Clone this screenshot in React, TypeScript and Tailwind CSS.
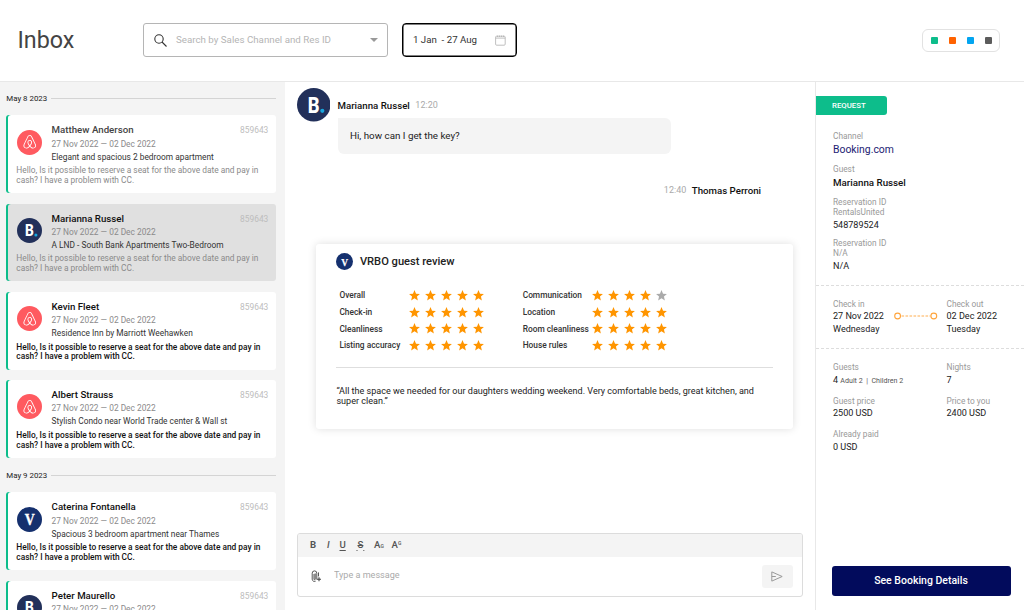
import { useState } from "react";
import { FaAirbnb } from "react-icons/fa";
import clsx from "clsx";

type Channel = "airbnb" | "booking" | "vrbo";

interface Thread {
  id: number;
  name: string;
  property: string;
  channel: Channel;
  read?: boolean;
}

const groups: { date: string; threads: Thread[] }[] = [
  {
    date: "May 8 2023",
    threads: [
      { id: 1, name: "Matthew Anderson", property: "Elegant and spacious 2 bedroom apartment", channel: "airbnb", read: true },
      { id: 2, name: "Marianna Russel", property: "A LND - South Bank Apartments Two-Bedroom", channel: "booking", read: true },
      { id: 3, name: "Kevin Fleet", property: "Residence Inn by Marriott Weehawken", channel: "airbnb" },
      { id: 4, name: "Albert Strauss", property: "Stylish Condo near World Trade center & Wall st", channel: "airbnb" },
    ],
  },
  {
    date: "May 9 2023",
    threads: [
      { id: 5, name: "Caterina Fontanella", property: "Spacious 3 bedroom apartment near Thames", channel: "vrbo" },
      { id: 6, name: "Peter Maurello", property: "Residence Inn by Marriott Weehawken", channel: "booking" },
    ],
  },
];

const ratings = [
  [
    { label: "Overall", stars: 5 },
    { label: "Check-in", stars: 5 },
    { label: "Cleanliness", stars: 5 },
    { label: "Listing accuracy", stars: 5 },
  ],
  [
    { label: "Communication", stars: 4 },
    { label: "Location", stars: 5 },
    { label: "Room cleanliness", stars: 5 },
    { label: "House rules", stars: 5 },
  ],
];

const ChannelLogo = ({ channel, className }: { channel: Channel; className: string }) => {
  if (channel === "airbnb") {
    return (
      <div className={clsx("flex shrink-0 items-center justify-center rounded-full bg-[#ff5a60] text-white", className)}>
        <FaAirbnb className="h-[62%] w-[62%]" />
      </div>
    );
  }
  if (channel === "booking") {
    return (
      <svg viewBox="0 0 34 34" className={clsx("shrink-0", className)}>
        <circle cx="17" cy="17" r="17" fill="#22305a" />
        <text x="11" y="25" textLength="12" lengthAdjust="spacingAndGlyphs" fontFamily="Roboto" fontWeight="800" fontSize="21.5" fill="#fff">B</text>
        <circle cx="25.7" cy="23.2" r="2.1" fill="#18a5dc" />
      </svg>
    );
  }
  return (
    <svg viewBox="0 0 34 34" className={clsx("shrink-0", className)}>
      <circle cx="17" cy="17" r="17" fill="#15306e" />
      <text x="10.6" y="25" textLength="13.6" lengthAdjust="spacingAndGlyphs" fontFamily="Liberation Serif" fontWeight="700" fontSize="22" fill="#fff" stroke="#fff" strokeWidth="0.5">V</text>
    </svg>
  );
};

const Star = ({ filled }: { filled: boolean }) => (
  <svg viewBox="0 0 24 24" className={clsx("h-[13px] w-[13px]", filled ? "fill-[#ff9500]" : "fill-[#aaaaaa]")}>
    <path d="M12 17.27 18.18 21l-1.64-7.03L22 9.24l-7.19-.61L12 2 9.19 8.63 2 9.24l5.46 4.73L5.82 21z" />
  </svg>
);

const DateDivider = ({ label }: { label: string }) => (
  <div className="flex h-[33.3px] items-center gap-[4.5px]">
    <span className="w-[40px] text-[7.9px] whitespace-nowrap text-[#222]">{label}</span>
    <span className="h-px flex-1 bg-[#d4d4d4]" />
  </div>
);

interface ThreadCardProps {
  thread: Thread;
  selected: boolean;
  onClick: () => void;
}

const ThreadCard: React.FC<ThreadCardProps> = ({ thread, selected, onClick }) => (
  <div
    onClick={onClick}
    className={clsx(
      "mb-[10.5px] h-[77.8px] shrink-0 cursor-pointer rounded-[3px] pt-[8.3px] pr-[8px] pl-[10px] shadow-[inset_2px_0_0_#0dbd8b]",
      selected ? "bg-[#e0e0e0]" : "bg-white"
    )}
  >
    <div className="flex">
      <ChannelLogo channel={thread.channel} className="mt-[6px] ml-[0.6px] h-[25px] w-[25px]" />
      <div className="ml-[9.7px] flex-1 whitespace-nowrap">
        <div className="flex h-[14px] items-center justify-between">
          <span className={clsx("text-[9.7px] font-medium", thread.read && !selected ? "text-[#444]" : "text-[#111]")}>{thread.name}</span>
          <span className="text-[8.4px] text-[#bdbdbd]">859643</span>
        </div>
        <div className="h-[13px] text-[8.36px] leading-[13px] text-[#8a8a8a]">27 Nov 2022 — 02 Dec 2022</div>
        <div className="h-[12px] text-[8.36px] leading-[12px] text-[#333]">{thread.property}</div>
      </div>
    </div>
    <p className={clsx("mt-[3.5px] text-[8.36px] leading-[9.8px] whitespace-nowrap", thread.read ? "text-[#8a8a8a]" : "font-medium text-[#111]")}>
      Hello, Is it possible to reserve a seat for the above date and pay in
      <br />
      cash? I have a problem with CC.
    </p>
  </div>
);

const Label = ({ children }: { children: React.ReactNode }) => (
  <div className="h-[10px] text-[8.3px] leading-[10px] text-[#999]">{children}</div>
);

const Value = ({ children }: { children: React.ReactNode }) => (
  <div className="h-[12.5px] text-[9.05px] leading-[12.5px] text-[#222]">{children}</div>
);

const App = () => {
  const [selected, setSelected] = useState(2);
  const [message, setMessage] = useState("");

  return (
    <div className="flex h-[610px] w-[1024px] flex-col overflow-hidden bg-white font-['Roboto',sans-serif] text-[#222]">
      <header className="flex h-[82px] shrink-0 items-center border-b border-[#e8e8e8] pb-[1px]">
        <h1 className="w-[143px] pt-[2px] pl-[17.5px] text-[23.3px] leading-none text-[#444]">Inbox</h1>
        <div className="flex h-[34px] w-[245px] items-center rounded-[3px] border border-[#b5b5b5] pr-[9px] pl-[10px]">
          <svg viewBox="0 0 13 13" className="h-[13px] w-[13px]" fill="none" stroke="#333" strokeWidth="1.1">
            <circle cx="5" cy="5" r="4.2" />
            <path d="m8 8 4.5 4.5" />
          </svg>
          <span className="ml-[9px] flex-1 text-[9.75px] whitespace-nowrap text-[#b5b5b5]">Search by Sales Channel and Res ID</span>
          <svg viewBox="0 0 8 4" className="h-[4px] w-[8px]" fill="#999"><path d="M0 0h8L4 4z" /></svg>
        </div>
        <div className="ml-[14px] flex h-[34px] w-[115px] items-center justify-between rounded-[4px] border border-black pr-[10px] pl-[10px] shadow-[inset_0_0_0_0.5px_#000]">
          <span className="text-[9.7px] whitespace-pre text-[#333]">1 Jan  - 27 Aug</span>
          <svg viewBox="0 0 11 11" className="h-[11px] w-[11px]" fill="none" stroke="#b0b0b0" strokeWidth="0.8">
            <rect x="0.6" y="1.2" width="9.6" height="9" rx="1" />
            <path d="M.6 3.1h9.6M2.5 .6v1.4M4.5 .6v1.4M6.5 .6v1.4M8.5 .6v1.4" />
          </svg>
        </div>
        <div className="mr-[23.7px] ml-auto flex h-[23px] w-[78px] items-center justify-between rounded-[6px] border border-[#e2e2e2] px-[7.5px]">
          <span className="h-[7px] w-[7px] rounded-[1px] bg-[#0dbd8b]" />
          <span className="h-[7px] w-[7px] rounded-[1px] bg-[#ff6200]" />
          <span className="h-[7px] w-[7px] rounded-[1px] bg-[#03a5f0]" />
          <span className="h-[7px] w-[7px] rounded-[1px] bg-[#5c5c5c]" />
        </div>
      </header>

      <div className="flex min-h-0 flex-1">
        <aside className="flex w-[284.5px] shrink-0 flex-col overflow-hidden bg-[#f4f4f4] pr-[8.2px] pl-[6.3px]">
          {groups.map((group, i) => (
            <div key={group.date} className={clsx(i > 0 && "-mt-[9.5px]")}>
              <DateDivider label={group.date} />
              {group.threads.map((thread) => (
                <ThreadCard key={thread.id} thread={thread} selected={selected === thread.id} onClick={() => setSelected(thread.id)} />
              ))}
            </div>
          ))}
        </aside>

        <main className="flex flex-1 flex-col pr-[12px] pl-[12px]">
          {/* Conversation */}
          <div className="flex pt-[6.4px]">
            <ChannelLogo channel="booking" className="h-[33.5px] w-[33.5px]" />
            <div className="ml-[7.5px] pt-[9.6px]">
              <div className="flex h-[16px] items-center gap-[5.5px]">
                <span className="text-[9.7px] font-medium text-[#111]">Marianna Russel</span>
                <span className="text-[9px] text-[#aaa]">12:20</span>
              </div>
              <div className="mt-[4.5px] flex h-[35.5px] w-[333px] items-center rounded-[6px] rounded-tl-none bg-[#f4f4f4] pl-[12.5px] text-[9.8px]">
                Hi, how can I get the key?
              </div>
            </div>
          </div>
          <div className="mt-[29.2px] mr-[42px] flex h-[16px] items-center justify-end gap-[5.5px]">
            <span className="text-[9px] text-[#aaa]">12:40</span>
            <span className="text-[9.7px] font-medium text-[#111]">Thomas Perroni</span>
          </div>

          {/* Guest review */}
          <section className="mt-[45px] ml-[19.4px] h-[185px] w-[477.6px] rounded-[3px] bg-white pt-[9.3px] pr-[20.5px] pl-[20.5px] shadow-[0_0_8px_rgba(0,0,0,0.13)]">
            <div className="flex items-center gap-[6.5px]">
              <ChannelLogo channel="vrbo" className="h-[17px] w-[17px]" />
              <h2 className="text-[11.15px] leading-[17px] font-medium">VRBO guest review</h2>
            </div>
            <div className="mt-[16.7px] ml-[3px] flex">
              {ratings.map((column, i) => (
                <div key={i} className="w-[183.3px]">
                  {column.map((row) => (
                    <div key={row.label} className="flex h-[16.7px] items-center">
                      <span className="w-[68.8px] text-[8.36px] font-medium whitespace-nowrap text-[#333]">{row.label}</span>
                      <div className="flex gap-[3px]">
                        {[1, 2, 3, 4, 5].map((n) => (
                          <Star key={n} filled={n <= row.stars} />
                        ))}
                      </div>
                    </div>
                  ))}
                </div>
              ))}
            </div>
            <div className="mt-[13.5px] h-px bg-[#dedede]" />
            <p className="mt-[17.5px] text-[9.05px] leading-[10.3px] whitespace-nowrap">
              “All the space we needed for our daughters wedding weekend. Very comfortable beds, great kitchen, and
              <br />
              super clean.”
            </p>
          </section>

          {/* Message editor */}
          <div className="mt-auto mb-[13px] h-[64px] overflow-hidden rounded-[3px] border border-[#dcdcdc]">
            <div className="flex h-[22.5px] items-center bg-[#f4f4f4] pl-[12.5px] text-[9.6px] font-medium text-[#555]">
              <span className="w-[17px] font-bold">B</span>
              <span className="w-[12.5px] italic">I</span>
              <span className="w-[17px] underline underline-offset-2">U</span>
              <span className="w-[17.5px] whitespace-pre line-through"><span className="text-[4px]"> </span>S<span className="text-[4px]"> </span></span>
              <span className="w-[17.5px]">A<span className="text-[5px]">G</span></span>
              <span>A<span className="relative -top-[3px] text-[5px]">G</span></span>
            </div>
            <div className="flex h-[39px] items-center pr-[9px] pl-[13px]">
              <svg viewBox="0 0 12 13" className="h-[13px] w-[12px]" fill="none" stroke="#444" strokeWidth="1">
                <path d="M5.8 9.6V3.2a2.3 2.3 0 0 0-4.6 0v6a2.3 2.3 0 0 0 3.4 2M3 4v5.2a.6.6 0 0 0 1.2 0V3.4M7.5 2.4v4" strokeWidth="0.9" />
                <path d="M8 7.2v4M6 9.2h4" strokeWidth="1.1" />
              </svg>
              <input
                value={message}
                onChange={(e) => setMessage(e.target.value)}
                placeholder="Type a message"
                className="ml-[11.5px] flex-1 text-[9.05px] outline-none placeholder:text-[#aaa]"
              />
              <button className="flex h-[23px] w-[31.5px] items-center justify-center rounded-[3px] bg-[#f4f4f4]">
                <svg viewBox="0 0 12 11" className="h-[11px] w-[12px]" fill="none" stroke="#999" strokeWidth="1">
                  <path d="M.8 .9 11.2 5.5.8 10.1zM.8 5.5h4" />
                </svg>
              </button>
            </div>
          </div>
        </main>

        <aside className="flex w-[209px] shrink-0 flex-col border-l border-[#e8e8e8]">
          <div className="mt-[14.4px] flex h-[18.6px] w-[71.3px] items-center rounded-r-[3px] bg-[#0dbd8b] pl-[16px] text-[7.8px] font-medium text-white">
            REQUEST
          </div>
          <div className="h-[171px] border-b border-dashed border-[#ddd] pt-[16px] pl-[17px]">
            <Label>Channel</Label>
            <div className="mt-[2px] h-[14px] text-[10.4px] leading-[14px] text-[#1b2173]">Booking.com</div>
            <div className="mt-[7px]"><Label>Guest</Label></div>
            <div className="mt-[2px] h-[14px] text-[9.75px] leading-[14px] font-medium text-[#111]">Marianna Russel</div>
            <div className="mt-[7px]">
              <Label>Reservation ID</Label>
              <Label>RentalsUnited</Label>
            </div>
            <div className="mt-[2px]"><Value>548789524</Value></div>
            <div className="mt-[6.5px]">
              <Label>Reservation ID</Label>
              <Label>N/A</Label>
            </div>
            <div className="mt-[2px]"><Value>N/A</Value></div>
          </div>
          <div className="flex h-[63px] border-b border-dashed border-[#ddd] pt-[13px] pl-[17px]">
            <div className="w-[61px] whitespace-nowrap">
              <Label>Check in</Label>
              <div className="mt-[1.5px]">
                <Value>27 Nov 2022</Value>
                <Value>Wednesday</Value>
              </div>
            </div>
            <svg viewBox="0 0 44 8" className="mt-[13.5px] h-[8px] w-[44px]" fill="none" stroke="#ffa53d" strokeWidth="1.1">
              <circle cx="3.6" cy="4" r="2.9" />
              <circle cx="39.8" cy="4" r="2.9" />
              <path d="M7.5 4h29" strokeDasharray="2.6 1.4" strokeWidth="0.9" />
            </svg>
            <div className="ml-[8.5px] whitespace-nowrap">
              <Label>Check out</Label>
              <div className="mt-[1.5px]">
                <Value>02 Dec 2022</Value>
                <Value>Tuesday</Value>
              </div>
            </div>
          </div>
          <div className="grid grid-cols-[113.5px_1fr] gap-y-[9.5px] pt-[13.4px] pl-[17px]">
            <div className="flex flex-col gap-[1.4px]">
              <Label>Guests</Label>
              <Value>4 <span className="text-[7.1px] text-[#555]">Adult 2 &nbsp;|&nbsp; Children 2</span></Value>
            </div>
            <div className="flex flex-col gap-[1.4px]">
              <Label>Nights</Label>
              <Value>7</Value>
            </div>
            <div className="flex flex-col gap-[1.4px]">
              <Label>Guest price</Label>
              <Value>2500 USD</Value>
            </div>
            <div className="flex flex-col gap-[1.4px]">
              <Label>Price to you</Label>
              <Value>2400 USD</Value>
            </div>
            <div className="flex flex-col gap-[1.4px]">
              <Label>Already paid</Label>
              <Value>0 USD</Value>
            </div>
          </div>
          <button className="mt-auto mr-[13.5px] mb-[14.4px] ml-[15.5px] h-[30px] rounded-[3px] bg-[#020b5c] text-[10.5px] font-medium text-white">
            See Booking Details
          </button>
        </aside>
      </div>
    </div>
  );
};

export default App;
